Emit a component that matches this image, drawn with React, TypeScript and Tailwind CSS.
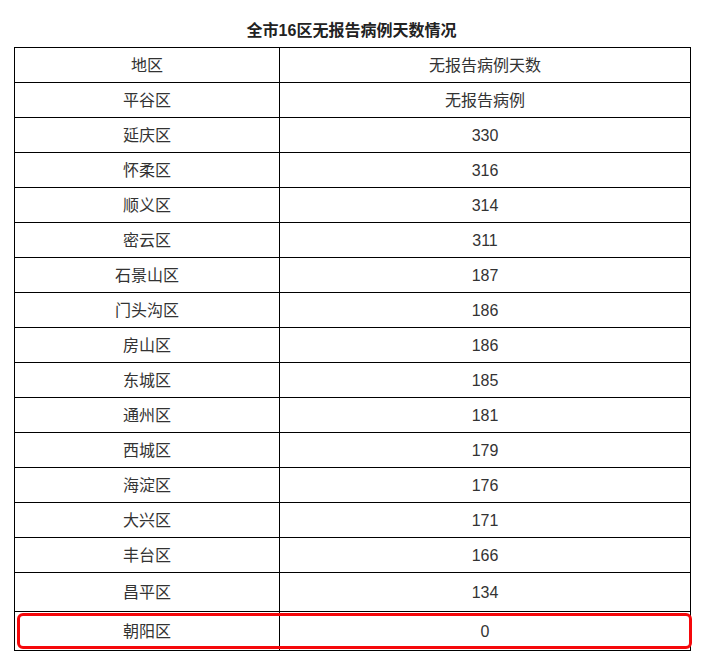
const rows: [string, string][] = [
  ["平谷区", "无报告病例"],
  ["延庆区", "330"],
  ["怀柔区", "316"],
  ["顺义区", "314"],
  ["密云区", "311"],
  ["石景山区", "187"],
  ["门头沟区", "186"],
  ["房山区", "186"],
  ["东城区", "185"],
  ["通州区", "181"],
  ["西城区", "179"],
  ["海淀区", "176"],
  ["大兴区", "171"],
  ["丰台区", "166"],
];

const font = { fontFamily: '"Liberation Sans", "Noto Sans CJK SC", sans-serif' };

function Row({ name, value, tall }: { name: string; value: string; tall?: boolean }) {
  return (
    <div className={`grid grid-cols-[265px_1fr] border-b border-black ${tall ? "h-[39px]" : "h-[35px]"}`}>
      <div className="flex items-center justify-center border-r border-black pt-[1px]">{name}</div>
      <div className="flex items-center justify-center pt-[1px]">{value}</div>
    </div>
  );
}

export default function App() {
  return (
    <div className="w-[703px] h-[670px] bg-white text-[#333] text-[16px]" style={font}>
      <div className="pt-[20px] pb-[5px] text-center font-bold leading-[22px] text-[16px] text-[#222]">
        全市16区无报告病例天数情况
      </div>
      <div className="ml-[14px] w-[677px] border-t border-l border-r border-black">
        <Row name="地区" value="无报告病例天数" />
        {rows.map(([n, v]) => (
          <Row key={n} name={n} value={v} />
        ))}
        <Row name="昌平区" value="134" tall />
        <div className="relative">
          <Row name="朝阳区" value="0" tall />
          {/* highlight box */}
          <div className="absolute left-[2px] top-[1px] w-[675px] h-[36px] rounded-[6px] border-[3px] border-[#f5080b]" />
        </div>
      </div>
    </div>
  );
}
